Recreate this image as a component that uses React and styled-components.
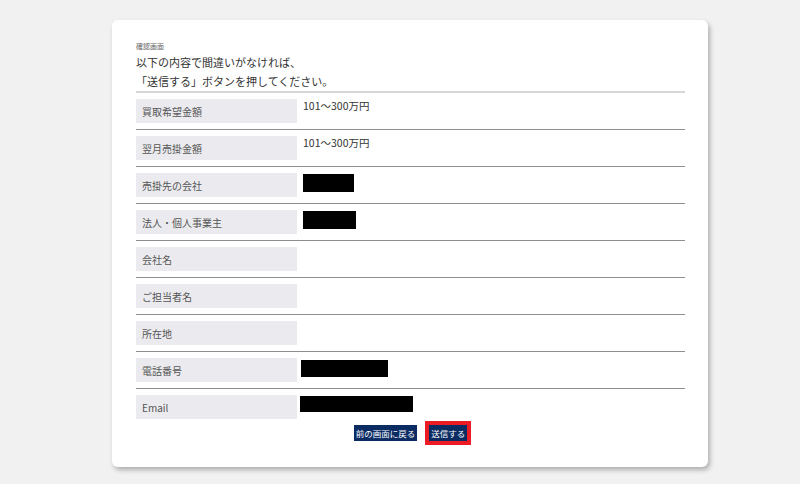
import React from "react";
import styled, { createGlobalStyle } from "styled-components";

const GlobalStyle = createGlobalStyle`
  body {
    margin: 0;
    background: #f1f1f1;
    font-family: "Noto Sans CJK JP", "Noto Sans", sans-serif;
  }
`;

const Page = styled.div`
  padding: 20px 0 17px 112px;
`;

const Card = styled.div`
  width: 596px;
  box-sizing: border-box;
  background: #ffffff;
  border-radius: 6px;
  box-shadow: 2px 3px 5px rgba(0, 0, 0, 0.28);
  padding: 20px 23px 26px 24px;
`;

const Caption = styled.div`
  font-size: 7px;
  line-height: 13px;
  color: #666;
`;

const Lead = styled.p`
  margin: 0;
  font-size: 11px;
  line-height: 19px;
  color: #333;
`;

const Table = styled.div`
  border-top: 2px solid #d6d6d6;
`;

const Row = styled.div`
  display: flex;
  align-items: flex-start;
  padding: 6px 0;
  border-bottom: ${(p) => (p.$last ? "none" : "1px solid #8e8e8e")};
`;

const Label = styled.div`
  width: 161px;
  height: 24px;
  flex-shrink: 0;
  display: flex;
  align-items: center;
  padding-left: 6px;
  box-sizing: border-box;
  background: #ebebef;
  font-size: 10px;
  color: #555;
`;

const Value = styled.div`
  margin-left: 6px;
  font-size: 10.5px;
  line-height: 13px;
  color: #333;
`;

const Redacted = styled.div`
  background: #000;
  width: ${(p) => p.$w}px;
  height: ${(p) => p.$h}px;
  margin-top: ${(p) => p.$top || 1}px;
  margin-left: ${(p) => p.$shift || 0}px;
`;

const Actions = styled.div`
  display: flex;
  justify-content: center;
  align-items: center;
  gap: 12px;
`;

const Button = styled.button`
  border: none;
  margin: 0;
  height: 16px;
  padding: 0 2px;
  background: #0b2b63;
  color: #fff;
  font-family: inherit;
  font-size: 8.5px;
  line-height: 16px;
  outline: ${(p) => (p.$focus ? "4px solid #ec1c24" : "none")};
  outline-offset: 0;
`;

const rows = [
  { label: "買取希望金額", value: "101～300万円" },
  { label: "翌月売掛金額", value: "101～300万円" },
  { label: "売掛先の会社", redact: { w: 51, h: 18 } },
  { label: "法人・個人事業主", redact: { w: 53, h: 18 } },
  { label: "会社名" },
  { label: "ご担当者名" },
  { label: "所在地" },
  { label: "電話番号", redact: { w: 87, h: 17, shift: -2, top: 2 } },
  { label: "Email", redact: { w: 113, h: 16, shift: -3, top: 1 } },
];

const App = () => {
  return (
    <>
      <GlobalStyle />
      <Page>
        <Card>
          <Caption>確認画面</Caption>
          <Lead>以下の内容で間違いがなければ、</Lead>
          <Lead>「送信する」ボタンを押してください。</Lead>
          <Table>
            {rows.map((row, index) => (
              <Row key={row.label} $last={index === rows.length - 1}>
                <Label>{row.label}</Label>
                {row.redact ? (
                  <Value>
                    <Redacted
                      $w={row.redact.w}
                      $h={row.redact.h}
                      $shift={row.redact.shift}
                      $top={row.redact.top}
                    />
                  </Value>
                ) : (
                  <Value>{row.value}</Value>
                )}
              </Row>
            ))}
          </Table>
          <Actions>
            <Button type="button">前の画面に戻る</Button>
            <Button type="button" $focus>
              送信する
            </Button>
          </Actions>
        </Card>
      </Page>
    </>
  );
};

export default App;
